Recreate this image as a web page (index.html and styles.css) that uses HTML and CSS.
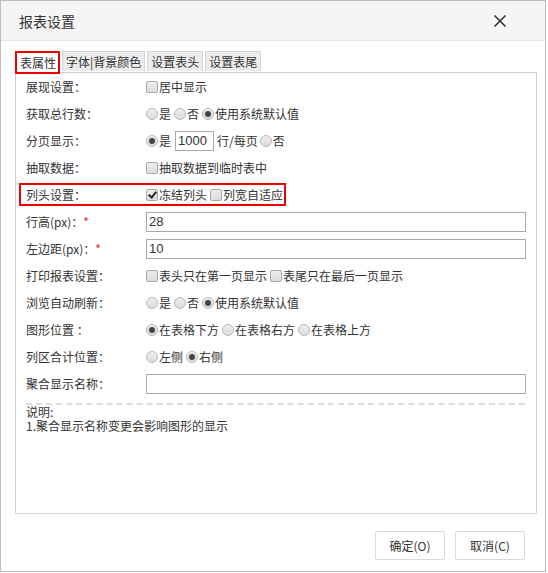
FILE: index.html
```html
<!DOCTYPE html>
<html>
<head>
	<title>报表设置</title>
	<meta charset="utf-8">
	<link rel="stylesheet" href="styles.css">
</head>
<body>
<div class="dialog">
	<div class="dlg-head">
		<span class="dlg-title">报表设置</span>
		<svg class="dlg-close" width="14" height="14" viewBox="0 0 14 14"><path d="M1.5 1.5L12.5 12.5M12.5 1.5L1.5 12.5" stroke="#333" stroke-width="1.6" fill="none"/></svg>
	</div>
	<div class="dlg-body">
		<ul class="tabs">
			<li class="current">表属性</li>
			<li>字体|背景颜色</li>
			<li>设置表头</li>
			<li>设置表尾</li>
		</ul>
		<div class="panel">
			<div class="row">
				<span class="lbl">展现设置：</span>
				<div class="val"><label class="opt"><i class="chk"></i>居中显示</label></div>
			</div>
			<div class="row">
				<span class="lbl">获取总行数：</span>
				<div class="val">
					<label class="opt"><i class="rad"></i>是</label>
					<label class="opt"><i class="rad"></i>否</label>
					<label class="opt"><i class="rad on"></i>使用系统默认值</label>
				</div>
			</div>
			<div class="row">
				<span class="lbl">分页显示：</span>
				<div class="val">
					<label class="opt"><i class="rad on"></i>是</label>
					<input class="txt small" type="text" value="1000">
					<span class="unit">行/每页</span>
					<label class="opt"><i class="rad"></i>否</label>
				</div>
			</div>
			<div class="row">
				<span class="lbl">抽取数据：</span>
				<div class="val"><label class="opt"><i class="chk"></i>抽取数据到临时表中</label></div>
			</div>
			<div class="row mark">
				<span class="lbl">列头设置：</span>
				<div class="val">
					<label class="opt"><i class="chk on"></i>冻结列头</label>
					<label class="opt"><i class="chk"></i>列宽自适应</label>
				</div>
			</div>
			<div class="row">
				<span class="lbl">行高(px)：<em>*</em></span>
				<div class="val"><input class="txt" type="text" value="28"></div>
			</div>
			<div class="row">
				<span class="lbl">左边距(px)：<em>*</em></span>
				<div class="val"><input class="txt" type="text" value="10"></div>
			</div>
			<div class="row">
				<span class="lbl">打印报表设置：</span>
				<div class="val">
					<label class="opt"><i class="chk"></i>表头只在第一页显示</label>
					<label class="opt"><i class="chk"></i>表尾只在最后一页显示</label>
				</div>
			</div>
			<div class="row">
				<span class="lbl">浏览自动刷新：</span>
				<div class="val">
					<label class="opt"><i class="rad"></i>是</label>
					<label class="opt"><i class="rad"></i>否</label>
					<label class="opt"><i class="rad on"></i>使用系统默认值</label>
				</div>
			</div>
			<div class="row">
				<span class="lbl">图形位置 ：</span>
				<div class="val">
					<label class="opt"><i class="rad on"></i>在表格下方</label>
					<label class="opt"><i class="rad"></i>在表格右方</label>
					<label class="opt"><i class="rad"></i>在表格上方</label>
				</div>
			</div>
			<div class="row">
				<span class="lbl">列区合计位置：</span>
				<div class="val">
					<label class="opt"><i class="rad"></i>左侧</label>
					<label class="opt"><i class="rad on"></i>右侧</label>
				</div>
			</div>
			<div class="row">
				<span class="lbl">聚合显示名称：</span>
				<div class="val"><input class="txt" type="text" value=""></div>
			</div>
			<div class="note">
				<p>说明:</p>
				<p>1.聚合显示名称变更会影响图形的显示</p>
			</div>
		</div>
	</div>
	<div class="dlg-foot">
		<button class="btn">确定(O)</button>
		<button class="btn">取消(C)</button>
	</div>
</div>
</body>
</html>
```

FILE: styles.css
```css
body,div,ul,li,p{margin:0;padding:0;}
ul{list-style-type:none;}
body{
	background:#fff;
	font:12px/16px "Noto Sans CJK SC","Liberation Sans",sans-serif;
	color:#333;
}

.dialog{
	width:544px;
	height:570px;
	border:1px solid #bdbdbd;
	background:#fff;
}
.dlg-head{
	display:flex;
	align-items:center;
	justify-content:space-between;
	height:39px;
	padding:0 38px 0 18px;
	background:#f5f5f5;
	border-bottom:1px solid #e6e6e6;
}
.dlg-title{
	font-size:14px;
	color:#333;
}
.dlg-close{display:block;}

.dlg-body{
	padding:10px 8px 0 14px;
}
.tabs{
	display:flex;
	gap:2px;
	height:21px;
}
.tabs li{
	height:19px;
	line-height:19px;
	padding:0 3px;
	background:#ececec;
	border:1px solid #d4d4d4;
	border-bottom:none;
	font-size:12px;
	color:#333;
}
.tabs li.current{
	height:19px;
	padding:0 2px 0 3px;
	background:#fff;
	border:2px solid #e00;
}
.panel{
	height:440px;
	border:1px solid #d0d0d0;
}

.row{
	display:flex;
	align-items:center;
	height:27px;
	padding-left:10px;
}
.row.mark{
	width:fit-content;
	height:19px;
	margin:2px 0 2px 3px;
	padding:0 1px 0 5px;
	border:2px solid #e00;
}
.lbl{
	width:120px;
	flex:none;
	white-space:nowrap;
}
.lbl em{
	font-style:normal;
	color:#e22;
}
.val{
	display:flex;
	align-items:center;
	gap:3px;
	flex:1;
	white-space:nowrap;
}
.opt{
	display:flex;
	align-items:center;
	gap:1px;
}

.chk,.rad{
	display:inline-block;
	position:relative;
	width:10px;
	height:10px;
	border:1px solid #a9a9a9;
	background:linear-gradient(#ededed,#dcdcdc);
}
.chk{border-radius:2px;}
.rad{border-radius:50%;border-color:#b9b9b9;}
.rad.on::after{
	content:"";
	position:absolute;
	left:2px;
	top:2px;
	width:6px;
	height:6px;
	border-radius:50%;
	background:#444;
}
.chk.on::after{
	content:"";
	position:absolute;
	left:3px;
	top:0;
	width:3px;
	height:6px;
	border:solid #222;
	border-width:0 2px 2px 0;
	transform:rotate(40deg);
}

.txt{
	width:374px;
	height:18px;
	margin:0;
	padding:0 2px;
	border:1px solid #a9a9a9;
	font:13px "Liberation Sans",sans-serif;
	color:#333;
	outline:none;
}
.txt.small{
	width:33px;
	margin-left:1px;
}
.unit{margin-right:-1px;}

.note{
	margin:6px 11px 0 10px;
	border-top:2px dashed #dcdcdc;
}
.note p{
	line-height:14px;
}

.dlg-foot{
	display:flex;
	justify-content:flex-end;
	gap:10px;
	padding:17px 20px 0 0;
}
.btn{
	width:70px;
	height:29px;
	border:1px solid #dadada;
	border-radius:2px;
	background:#fff;
	font:12px "Noto Sans CJK SC","Liberation Sans",sans-serif;
	color:#333;
}
```
